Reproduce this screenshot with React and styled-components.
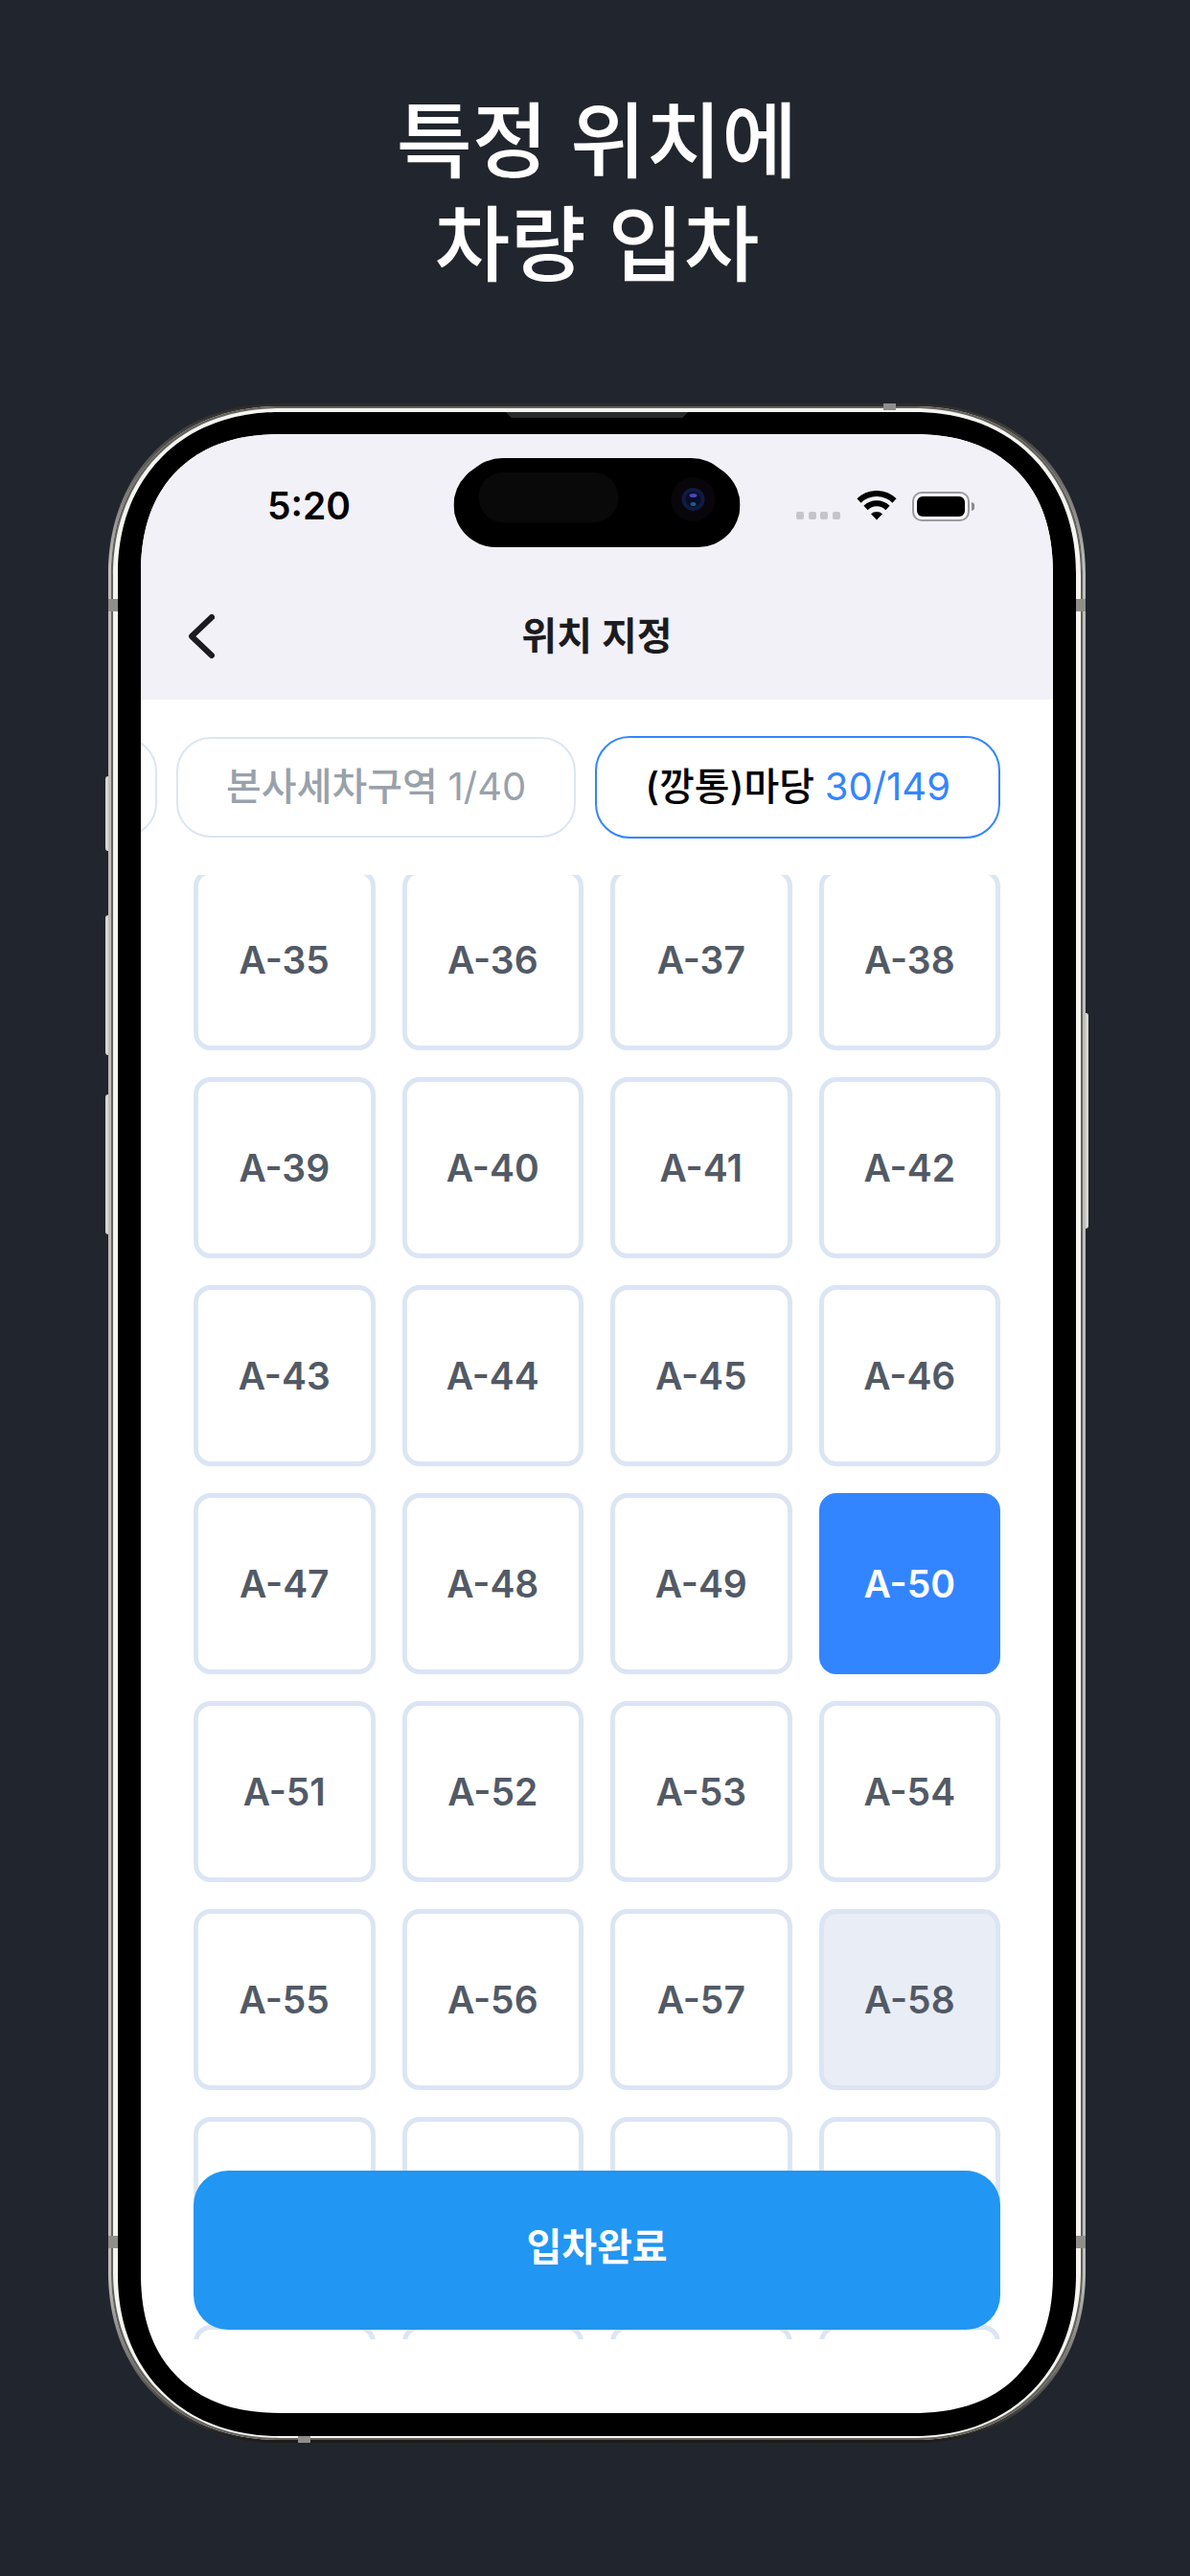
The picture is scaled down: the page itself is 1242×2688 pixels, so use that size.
import React, { useState } from "react";
import styled, { createGlobalStyle } from "styled-components";

const zones = [
  { id: "wash", name: "본사세차구역", used: 1, total: 40 },
  { id: "yard", name: "(깡통)마당", used: 30, total: 149 },
];

const FIRST_SLOT = 35;
const slots = Array.from({ length: 28 }, (_, i) => `A-${FIRST_SLOT + i}`);
const occupied = ["A-58"];
const pending = [0, 1, 2, 3];

const StatusBar = () => (
  <StyledStatusBar>
    <time>5:20</time>
    <Island viewBox="0 0 299 93" aria-hidden="true">
      <rect x="7" y="0" width="285" height="88" rx="44" />
      <rect x="0" y="5" width="299" height="88" rx="44" />
      <rect x="26" y="15" width="146" height="52" rx="26" fill="#090909" />
      <circle cx="250" cy="43" r="23" fill="#08060b" />
      <circle cx="250" cy="43" r="12" fill="#101b40" />
      <circle cx="250" cy="43" r="8" fill="#0a0c2a" />
      <ellipse cx="250" cy="39" rx="4" ry="2" fill="#4a46b8" />
      <ellipse cx="250" cy="48" rx="3" ry="2" fill="#1f5c80" />
    </Island>
    <StatusIcons viewBox="0 0 186 32" aria-hidden="true">
      <g fill="#c5c4c9">
        <rect x="0" y="22" width="8" height="8" rx="2" />
        <rect x="13" y="22" width="8" height="8" rx="2" />
        <rect x="25" y="22" width="8" height="8" rx="2" />
        <rect x="38" y="22" width="8" height="8" rx="2" />
      </g>
      <g fill="none" stroke="#000" strokeWidth="6">
        <path d="M65.500 10.500a26.500 26.500 0 0 1 37 0" />
        <path d="M72.500 18a16.500 16.500 0 0 1 23 0" />
      </g>
      <path d="M84 30.500l-6-6.200a9 9 0 0 1 12 0z" />
      <rect x="122" y="2" width="58" height="29" rx="9" fill="#f7f6fb" stroke="#9b9a9f" strokeWidth="2" />
      <rect x="126" y="6" width="50" height="21" rx="6" />
      <path d="M183 12a4.600 4.600 0 0 1 0 9z" fill="#8d8c91" />
    </StatusIcons>
  </StyledStatusBar>
);

const App = () => {
  const [zone, setZone] = useState("yard");
  const [selected, setSelected] = useState("A-50");

  return (
    <>
      <GlobalStyle />
      <Page>
        <Headline>
          특정 위치에
          <br />
          차량 입차
        </Headline>
        <Phone>
          <SideButton $side="left" $top={389} $height={78} />
          <SideButton $side="left" $top={534} $height={146} />
          <SideButton $side="left" $top={721} $height={146} />
          <SideButton $side="right" $top={636} $height={225} />
          <Band $edge="left" $at="top: 201px" />
          <Band $edge="right" $at="top: 201px" />
          <Band $edge="left" $at="bottom: 200px" />
          <Band $edge="right" $at="bottom: 200px" />
          <Band $edge="top" $at="right: 195px" />
          <Band $edge="bottom" $at="left: 195px" />
          <Bezel>
            <Speaker />
            <Screen>
              <Header>
                <StatusBar />
                <AppBar>
                  <BackButton type="button" aria-label="뒤로">
                    <svg viewBox="0 0 27 46" width="27" height="46">
                      <path d="M24 3L3 23l21 20" />
                    </svg>
                  </BackButton>
                  <h2>위치 지정</h2>
                </AppBar>
              </Header>
              <ZoneTabs>
                <ZoneTab type="button" aria-label="이전 구역" />
                {zones.map((item) => (
                  <ZoneTab
                    type="button"
                    key={item.id}
                    $active={item.id === zone}
                    onClick={() => setZone(item.id)}
                  >
                    {item.name}{" "}
                    <span>
                      {item.used}/{item.total}
                    </span>
                  </ZoneTab>
                ))}
              </ZoneTabs>
              <SlotList>
                <SlotGrid>
                  {slots.map((slot) => (
                    <Slot
                      type="button"
                      key={slot}
                      $selected={slot === selected}
                      $occupied={occupied.includes(slot)}
                      onClick={() => setSelected(slot)}
                    >
                      {slot}
                    </Slot>
                  ))}
                  {pending.map((item) => (
                    <Slot as="div" key={item} />
                  ))}
                </SlotGrid>
              </SlotList>
              <SubmitButton type="button">입차완료</SubmitButton>
            </Screen>
          </Bezel>
        </Phone>
      </Page>
    </>
  );
};

const GlobalStyle = createGlobalStyle`
  * {
    box-sizing: border-box;
  }
  body {
    margin: 0;
    background-color: #21252d;
    font-family: Inter, "Noto Sans CJK KR", sans-serif;
  }
  button {
    font-family: inherit;
    cursor: pointer;
  }
`;

const Page = styled.main`
  display: flex;
  flex-direction: column;
  height: 100vh;
  min-height: 1600px;
  padding: 94px 109px 139px 113px;
`;

const Headline = styled.h1`
  margin: 0 0 111px;
  color: #fff;
  font-size: 86px;
  font-weight: 500;
  line-height: 108px;
  text-align: center;
`;

const Phone = styled.div`
  position: relative;
  display: flex;
  flex: 1;
  min-height: 0;
  padding: 6px 7px 4px;
  border: 3px solid transparent;
  border-radius: 168px;
  background:
    linear-gradient(#f4f4f1, #f4f4f1) padding-box,
    linear-gradient(
      #2b2a27 0,
      #4a4945 40px,
      #bfbeb9 170px,
      #bfbeb9 calc(100% - 170px),
      #4a4945 calc(100% - 40px),
      #1b1a18 100%
    ) border-box;
  box-shadow: inset 0 0 0 2px #62615d;
  @supports (corner-shape: superellipse(1.1)) {
    border-radius: 178px;
    corner-shape: superellipse(1.1);
  }
`;

const SideButton = styled.i`
  position: absolute;
  ${({ $side }) => $side}: -6px;
  top: ${({ $top }) => $top - 3}px;
  width: 3px;
  height: ${({ $height }) => $height}px;
  border-radius: ${({ $side }) => ($side === "left" ? "3px 0 0 3px" : "0 3px 3px 0")};
  background-color: #d8d7d3;
`;

const Band = styled.i`
  position: absolute;
  ${({ $edge }) => $edge}: -3px;
  ${({ $at }) => $at};
  width: ${({ $edge }) => (["left", "right"].includes($edge) ? 10 : 13)}px;
  height: ${({ $edge }) => (["left", "right"].includes($edge) ? 13 : 7)}px;
  background-color: #8f8e8b;
`;

const Bezel = styled.div`
  position: relative;
  display: flex;
  flex: 1;
  min-width: 0;
  padding: 23px 24px 24px;
  border-radius: 158px;
  background-color: #000;
  @supports (corner-shape: superellipse(1.1)) {
    border-radius: 168px;
    corner-shape: superellipse(1.1);
  }
`;

const Speaker = styled.i`
  position: absolute;
  top: 0;
  left: 50%;
  width: 190px;
  height: 6px;
  margin-left: -95px;
  background-color: #2a2a2a;
  clip-path: polygon(0 0, 100% 0, 97% 100%, 3% 100%);
`;

const Screen = styled.div`
  position: relative;
  display: flex;
  flex: 1;
  flex-direction: column;
  min-width: 0;
  padding-bottom: 77px;
  border-radius: 134px;
  background-color: #fff;
  overflow: hidden;
  @supports (corner-shape: superellipse(1.2)) {
    border-radius: 146px;
    corner-shape: superellipse(1.2);
  }
`;

const Header = styled.header`
  background-color: #f2f1f7;
`;

const StyledStatusBar = styled.div`
  position: relative;
  display: flex;
  justify-content: space-between;
  align-items: center;
  height: 144px;
  padding: 6px 82px 0 132px;
  time {
    color: #000;
    font-size: 39px;
    font-weight: 600;
    line-height: 48px;
  }
`;

const Island = styled.svg`
  position: absolute;
  top: 25px;
  left: 50%;
  width: 299px;
  height: 93px;
  transform: translateX(-50%);
`;

const StatusIcons = styled.svg`
  width: 186px;
  height: 32px;
`;

const AppBar = styled.div`
  display: grid;
  grid-template-columns: 1fr auto 1fr;
  align-items: center;
  height: 133px;
  padding: 0 50px;
  h2 {
    margin: 0;
    color: #1c1b20;
    font-size: 40px;
    font-weight: 600;
    line-height: 48px;
  }
`;

const BackButton = styled.button`
  display: flex;
  justify-self: start;
  padding: 0;
  border: 0;
  background: none;
  svg {
    fill: none;
    stroke: #1c1b20;
    stroke-width: 6;
    stroke-linecap: round;
    stroke-linejoin: round;
  }
`;

const ZoneTabs = styled.nav`
  display: flex;
  justify-content: flex-end;
  align-items: center;
  gap: 20px;
  padding: 38px 55px;
  overflow: hidden;
`;

const ZoneTab = styled.button`
  flex-shrink: 0;
  min-width: 240px;
  height: ${({ $active }) => ($active ? 107 : 105)}px;
  padding: 0 50px 2px;
  border: 2px solid ${({ $active }) => ($active ? "#3385ff" : "#dbe5f4")};
  border-radius: 36px;
  background-color: #fff;
  color: ${({ $active }) => ($active ? "#000" : "#99a1ab")};
  font-size: 40px;
  font-weight: 500;
  line-height: 48px;
  white-space: nowrap;
  span {
    color: ${({ $active }) => ($active ? "#3385ff" : "#99a1ab")};
    font-weight: 400;
  }
`;

const SlotList = styled.section`
  flex: 1;
  min-height: 0;
  padding: 0 55px;
  overflow: hidden;
`;

const SlotGrid = styled.div`
  display: grid;
  grid-template-columns: repeat(4, 1fr);
  grid-auto-rows: 189px;
  gap: 28px;
  margin-top: -6px;
`;

const Slot = styled.button`
  padding: 0;
  border: 5px solid ${({ $selected }) => ($selected ? "#3385ff" : "#dbe5f4")};
  border-radius: 18px;
  background-color: ${({ $selected, $occupied }) =>
    $selected ? "#3385ff" : $occupied ? "#e9edf6" : "#fff"};
  color: ${({ $selected }) => ($selected ? "#fff" : "#525a66")};
  font-size: 39px;
  font-weight: 600;
  line-height: 48px;
`;

const SubmitButton = styled.button`
  position: absolute;
  right: 55px;
  bottom: 87px;
  left: 55px;
  height: 166px;
  padding: 0 0 6px;
  border: 0;
  border-radius: 36px;
  background-color: #2196f3;
  color: #fff;
  font-size: 40px;
  font-weight: 600;
  line-height: 48px;
`;

export default App;
